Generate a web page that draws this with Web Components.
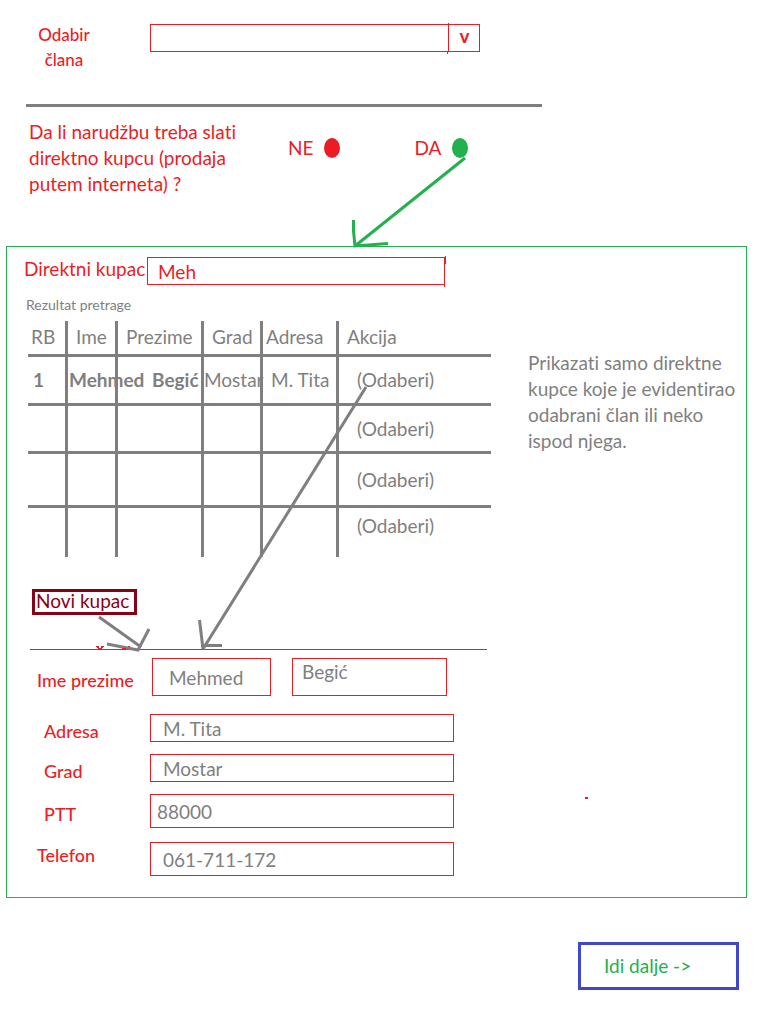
<!DOCTYPE html>
<html lang="bs">
<head>
<meta charset="utf-8">
<meta name="viewport" content="width=device-width, initial-scale=1">
<title>Narudžba – direktni kupac</title>
<style>
  :root { --red:#ed1c24; --gray:#7f7f7f; --green:#22b14c; --wine:#880015; --blue:#3f48cc; }
  body { margin:0; background:#fff; color:var(--gray); font:19px/26px Lato, Carlito, "Open Sans", sans-serif; font-variant-ligatures:none; }
</style>
</head>
<body>
<order-page>
  <member-select slot="member">Odabir člana</member-select>
  <delivery-choice slot="delivery">Da li narudžbu treba slati direktno kupcu (prodaja putem interneta) ?</delivery-choice>
  <buyer-panel slot="buyer">
    <buyer-search slot="main" value="Meh">Direktni kupac</buyer-search>
    <results-table slot="main"></results-table>
    <outline-button slot="main" kind="new">Novi kupac</outline-button>
    <buyer-form slot="main"></buyer-form>
    <span slot="note">Prikazati samo direktne kupce koje je evidentirao odabrani član ili neko ispod njega.</span>
  </buyer-panel>
  <outline-button slot="next" kind="next">Idi dalje -&gt;</outline-button>
  <flow-arrows slot="marks"></flow-arrows>
</order-page>

<script>
const define = (name, html, setup) => customElements.define(name, class extends HTMLElement {
  constructor() {
    super();
    const t = document.createElement('template');
    t.innerHTML = html;
    this.attachShadow({ mode: 'open' }).append(t.content.cloneNode(true));
  }
  connectedCallback() { if (setup) setup(this, this.shadowRoot); }
});

define('order-page', `
<style>
  :host { display:block; position:relative; padding:22px 25px 37px 6px; }
  hr { border:0; height:3px; background:var(--gray); margin:32px 0 12px 20px; max-width:516px; }
  .next { display:flex; justify-content:flex-end; padding:44px 8px 0 0; }
</style>
<slot name="member"></slot>
<hr>
<slot name="delivery"></slot>
<slot name="buyer"></slot>
<div class="next"><slot name="next"></slot></div>
<slot name="marks"></slot>`);

define('member-select', `
<style>
  :host { display:flex; align-items:flex-start; color:var(--red); padding-left:24px; }
  label { flex:none; width:68px; margin-right:52px; font-size:17px; line-height:25px; font-weight:500; text-align:center; }
  .box { flex:0 1 330px; display:grid; grid-template-columns:1fr 32px; margin-top:2px; }
  select { grid-area:1/1/2/3; appearance:none; width:100%; height:28px; margin:0; padding:0 40px 0 12px; border:1px solid var(--red); border-radius:0; background:transparent; color:inherit; font:inherit; }
  .mark { grid-area:1/2/2/3; border-left:1px solid var(--red); text-align:center; font-size:19px; font-weight:700; line-height:24px; pointer-events:none; }
</style>
<label for="member"><slot></slot></label>
<div class="box">
  <select id="member"><option value=""></option></select>
  <span class="mark" aria-hidden="true">v</span>
</div>`);

define('delivery-choice', `
<style>
  :host { display:flex; align-items:flex-start; color:var(--red); padding-left:23px; }
  p { flex:0 1 224px; margin:0; }
  .options { display:flex; gap:74px; padding:16px 0 0 35px; }
  label { display:flex; align-items:center; gap:11px; }
  input { appearance:none; flex:none; width:16px; height:20px; margin:0; border-radius:50%; background:var(--red); }
  input:checked { background:var(--green); }
</style>
<p id="q"><slot></slot></p>
<div class="options" role="radiogroup" aria-labelledby="q">
  <label>NE <input type="radio" name="direct" value="ne"></label>
  <label>DA <input type="radio" name="direct" value="da" checked></label>
</div>`);

define('buyer-panel', `
<style>
  :host { display:grid; grid-template-columns:minmax(0,1fr) 214px; column-gap:37px; margin-top:49px; padding:10px 4px 21px 21px; border:1px solid var(--green); }
  .note { padding-top:93px; }
</style>
<div><slot name="main"></slot></div>
<div class="note"><slot name="note"></slot></div>`);

define('buyer-search', `
<style>
  :host { display:flex; align-items:center; color:var(--red); margin-left:-4px; }
  label { flex:none; width:123px; line-height:28px; margin-top:-4px; white-space:nowrap; }
  input { box-sizing:border-box; flex:0 1 298px; min-width:0; height:28px; margin:0; padding:0 10px; border:1px solid var(--red); border-radius:0; background:transparent; color:inherit; font:inherit; }
</style>
<label for="q"><slot></slot></label>
<input id="q" type="text">`,
(host, root) => { root.querySelector('input').value = host.getAttribute('value') || ''; });

define('results-table', `
<style>
  :host { display:block; margin:12px 0 32px; }
  table { width:100%; table-layout:fixed; border-collapse:separate; border-spacing:0; }
  caption { text-align:left; font-size:14px; line-height:16px; padding-bottom:8px; margin-left:-2px; }
  th, td { box-sizing:border-box; padding:0; text-align:left; font-weight:400; white-space:nowrap; border:solid var(--gray); border-width:0 3px 3px 0; }
  th { height:36px; padding:0 0 2px 8px; }
  td { height:49px; }
  tr > :last-child { border-right:0; }
  tbody tr:nth-child(2) td { height:48px; }
  tbody tr:nth-child(3) td { height:54px; }
  tbody tr:last-child td { border-bottom:0; vertical-align:top; padding-top:5px; }
  .tight { padding-left:3px; }
  .c-rb { width:40px } .c-ime { width:50px } .c-prez { width:86px } .c-grad { width:59px } .c-adr { width:76px }
  .given { padding-left:1px; }
  .family { padding-left:34px; }
  .street { padding-left:8px; }
  .num { padding-left:5px; }
  button { appearance:none; margin:0 0 0 18px; padding:0; border:0; background:none; color:inherit; font:inherit; font-variant-ligatures:none; }
</style>
<table>
  <caption>Rezultat pretrage</caption>
  <colgroup><col class="c-rb"><col class="c-ime"><col class="c-prez"><col class="c-grad"><col class="c-adr"><col></colgroup>
  <thead><tr><th class="tight">RB</th><th>Ime</th><th>Prezime</th><th>Grad</th><th class="tight">Adresa</th><th>Akcija</th></tr></thead>
  <tbody>
    <tr><td class="num"><b>1</b></td><td class="given"><b>Mehmed</b></td><td class="family"><b>Begić</b></td><td>Mostar</td><td class="street">M. Tita</td><td><button type="button">(Odaberi)</button></td></tr>
    <tr><td></td><td></td><td></td><td></td><td></td><td><button type="button">(Odaberi)</button></td></tr>
    <tr><td></td><td></td><td></td><td></td><td></td><td><button type="button">(Odaberi)</button></td></tr>
    <tr><td></td><td></td><td></td><td></td><td></td><td><button type="button">(Odaberi)</button></td></tr>
  </tbody>
</table>`);

define('outline-button', `
<style>
  :host { display:block; }
  button { display:block; box-sizing:border-box; margin:0; background:#fff; border:3px solid; border-radius:0; font:inherit; text-align:left; white-space:nowrap; }
  :host([kind="new"]) button { width:105px; height:26px; margin-left:4px; padding:0 1px 2px; line-height:18px; color:var(--wine); border-color:var(--wine); }
  :host([kind="next"]) button { width:161px; height:48px; padding:0 23px; color:var(--green); border-color:var(--blue); }
</style>
<button type="button"><slot></slot></button>`);

define('buyer-form', `
<style>
  :host { display:block; color:var(--red); }
  hr { border:0; height:1px; background:var(--red); margin:34px 4px 8px 2px; }
  .row { display:grid; grid-template-columns:122px minmax(0,304px); align-items:center; margin-bottom:12px; }
  .wide { margin-bottom:18px; }
  .last { margin:14px 0 0; }
  label { padding:6px 0 0 16px; font-size:18px; line-height:20px; font-weight:500; white-space:nowrap; }
  .out { padding-left:9px; }
  .last label { padding:0 0 8px 9px; }
  input { box-sizing:border-box; width:100%; min-width:0; height:28px; margin:0; padding:0 12px; border:1px solid var(--red); border-radius:0; background:transparent; color:var(--gray); font:inherit; }
  .pair { display:grid; grid-template-columns:119fr 155fr; gap:21px; padding:0 7px 0 2px; }
  .pair input { height:38px; }
  .pair input:first-child { padding:0 16px; }
  .pair input:last-child { padding:0 9px 12px; }
  .tall { height:34px; }
  .near { padding:0 6px; }
</style>
<hr>
<div class="row wide"><label class="out" for="ime">Ime prezime</label>
  <div class="pair"><input id="ime" type="text" value="Mehmed"><input type="text" aria-label="Prezime" value="Begić"></div></div>
<div class="row"><label for="adresa">Adresa</label><input id="adresa" type="text" value="M. Tita"></div>
<div class="row"><label for="grad">Grad</label><input id="grad" type="text" value="Mostar"></div>
<div class="row"><label for="ptt">PTT</label><input id="ptt" class="tall near" type="text" value="88000"></div>
<div class="row last"><label for="tel">Telefon</label><input id="tel" class="tall" type="tel" value="061-711-172"></div>`);

define('flow-arrows', `
<style>
  :host { position:absolute; top:0; left:0; pointer-events:none; }
  svg { display:block; overflow:visible; }
</style>
<svg width="772" height="1027" viewBox="0 0 772 1027" fill="none" stroke-width="3" aria-hidden="true">
  <g stroke="#22b14c">
    <path d="M465 158 L355 246"/>
    <path d="M353.500 220 V231 L355 246 L388 243.500"/>
  </g>
  <g stroke="#7f7f7f">
    <path d="M366 387 L203 649"/>
    <path d="M199.500 620 L203 649 M201 645.500 H222"/>
    <path d="M99 617 L141 647"/>
    <path d="M149 629 L138 650 L107 644"/>
  </g>
  <g stroke="#ed1c24" stroke-width="1">
    <path d="M96 646.500 H99 M101 646.500 H104 M97 647.500 H99 M101 647.500 H103 M98 648.500 H102 M122 648.500 H126 M128 646.500 H130"/>
    <path d="M444.500 284 V287 M445.500 256 V264 M448.500 23 V25 M447.500 51 V54"/>
  </g>
  <path d="M585 797h3v2h-3z" fill="#ed1c24"/>
</svg>`);
</script>
</body>
</html>
